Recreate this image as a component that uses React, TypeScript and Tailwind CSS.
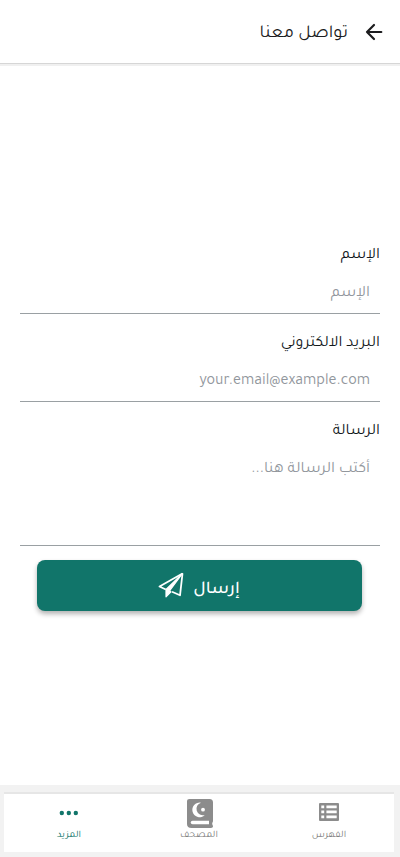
import React, { useState } from 'react';

const ArrowIcon = () => (
  <svg viewBox="0 0 24 24" className="w-6 h-6" fill="none" stroke="#1c1c1e" strokeWidth="2.2" strokeLinecap="round" strokeLinejoin="round">
    <path d="M19.300 12H5M12 5l-7 7 7 7" />
  </svg>
);

const SendIcon = () => (
  <svg viewBox="0 0 26 26" className="w-[26px] h-[26px] -translate-x-px -translate-y-px" fill="none" stroke="#fff" strokeWidth="1.800" strokeLinejoin="round">
    <path d="M24.500 1.500 1.500 14.500l6.300 3M24.500 1.500 22 23.300 14 19.800" />
    <path d="M8 17.500V24.800L13 19.800 11.500 18.800 24.500 1.500Z" fill="#fff" strokeWidth="1.200" />
  </svg>
);

const ListIcon = () => (
  <svg viewBox="0 0 20 18" className="w-5 h-[18px] -translate-y-px">
    <rect width="20" height="18" rx="1" fill="#8c8c8c" />
    <path d="M2.300 2.600h2.900v2.600H2.300zM7.400 2.600h10.300v2.600H7.400zM2.300 7.400h2.900v2.800H2.300zM7.400 7.400h10.300v2.800H7.400zM2.300 12.500h2.900v2.700H2.300zM7.400 12.500h10.300v2.700H7.400z" fill="#fff" />
  </svg>
);

const QuranIcon = () => (
  <svg viewBox="0 0 26 29" className="w-[26px] h-[29px] translate-x-px">
    <path d="M0 2.500C0 .8.900 0 2.500 0H22.500C25 0 26 1.500 26 3.500V22c0 1-.8 1.600-.8 2.700 0 1.200.8 1.500.8 2.600 0 1-.8 1.700-2 1.700H4.500C1.500 29 0 27.500 0 25z" fill="#8c8c8c" />
    <path d="M5.500 21.800H22v3.500H5.500a1.750 1.750 0 0 1 0-3.500z" fill="#fff" />
    <path d="M14 3.700a7.300 7.300 0 1 0 3.800 12.300 6 6 0 1 1-3.800-12.300z" fill="#fff" />
    <circle cx="16" cy="10.700" r="1.900" fill="#fff" />
  </svg>
);

const DotsIcon = () => (
  <svg viewBox="0 0 20 6" className="w-5 h-1.5" fill="#11756a">
    <circle cx="2.800" cy="3" r="2.200" />
    <circle cx="9.800" cy="3" r="2.200" />
    <circle cx="16.800" cy="3" r="2.200" />
  </svg>
);

const tabs = [
  { id: 'index', label: 'الفهرس', icon: <ListIcon /> },
  { id: 'mushaf', label: 'المصحف', icon: <QuranIcon /> },
  { id: 'more', label: 'المزيد', icon: <DotsIcon /> },
];

const App: React.FC = () => {
  const [name, setName] = useState('');
  const [email, setEmail] = useState('');
  const [message, setMessage] = useState('');

  const handleSubmit = (e: React.FormEvent) => {
    e.preventDefault();
  };

  return (
    <div
      dir="rtl"
      className="h-screen flex flex-col bg-white overflow-hidden font-['Tajawal','Cairo',sans-serif]"
    >
      <header className="h-16 mb-0.5 shrink-0 flex items-center gap-3.5 px-3.5 border-b border-[#d6d6d6] shadow-[0_2px_0_#f0f0f0]">
        <button type="button"><ArrowIcon /></button>
        <h1 className="text-[18.200px] pt-1.5 text-[#1c1c1e]">تواصل معنا</h1>
      </header>

      <form onSubmit={handleSubmit} className="flex-1 px-5 pt-[176px]">
        <div className="h-[72px] border-b border-[#9aa0a3]">
          <label className="block h-6 leading-7 text-base text-[#12181b]">الإسم</label>
          <input
            value={name}
            onChange={(e) => setName(e.target.value)}
            placeholder="الإسم"
            className="block w-full h-11 pt-3 px-2.5 text-base outline-none placeholder:text-[#92979d]"
          />
        </div>

        <div className="mt-4 h-[72px] border-b border-[#9aa0a3]">
          <label className="block h-6 leading-7 text-base text-[#12181b]">البريد الالكتروني</label>
          <input
            value={email}
            onChange={(e) => setEmail(e.target.value)}
            placeholder="your.email@example.com"
            className="block w-full h-11 pt-3 px-2.5 text-base outline-none placeholder:text-[#92979d]"
          />
        </div>

        <div className="mt-4 h-32 border-b border-[#9aa0a3]">
          <label className="block h-6 leading-7 text-base text-[#12181b]">الرسالة</label>
          <textarea
            value={message}
            onChange={(e) => setMessage(e.target.value)}
            placeholder="أكتب الرسالة هنا..."
            className="block w-full h-[100px] pt-4 px-2.5 text-base outline-none resize-none placeholder:text-[#92979d]"
          />
        </div>

        <button
          type="submit"
          className="mt-3.5 mr-[18px] w-[325px] h-[51px] rounded-lg bg-[#11756a] text-white text-lg font-medium flex items-center justify-center gap-2 shadow-[0_3px_5px_rgba(0,0,0,0.3)]"
        >
          <span className="pt-2">إرسال</span>
          <SendIcon />
        </button>
      </form>

      <footer className="h-[72px] shrink-0 bg-[#f2f2f2] pt-[7px] pl-1 pr-1.5 pb-[5px]">
        <nav className="h-full flex bg-white border-t-2 border-[#e6e6e6]">
          {tabs.map((tab) => (
            <button
              key={tab.id}
              type="button"
              className={`flex-1 flex flex-col items-center pt-1 text-[10px] leading-3 ${tab.id === 'more' ? 'text-[#11756a]' : 'text-[#808080]'}`}
            >
              <span className="h-[30px] mb-0.5 flex items-center">{tab.icon}</span>
              {tab.label}
            </button>
          ))}
        </nav>
      </footer>
    </div>
  );
};

export default App;
